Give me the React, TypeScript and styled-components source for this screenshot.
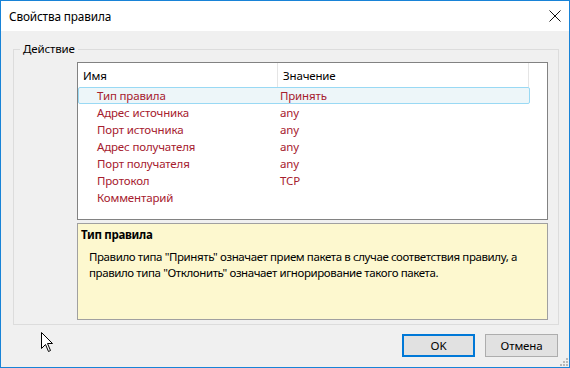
import React from "react";
import styled, { createGlobalStyle } from "styled-components";

interface Field {
  name: string;
  value: string;
}

const fields: Field[] = [
  { name: "Тип правила", value: "Принять" },
  { name: "Адрес источника", value: "any" },
  { name: "Порт источника", value: "any" },
  { name: "Адрес получателя", value: "any" },
  { name: "Порт получателя", value: "any" },
  { name: "Протокол", value: "TCP" },
  { name: "Комментарий", value: "" },
];

const App: React.FC = () => {
  return (
    <>
      <GlobalStyle />
      <S.Window>
        <S.TitleBar>
          <S.Title>Свойства правила</S.Title>
          <S.CloseButton>
            <svg width="12" height="12" viewBox="0 0 12 12">
              <path d="M0.5 0.5 L11.5 11.5 M11.5 0.5 L0.5 11.5" stroke="#111" strokeWidth="1" />
            </svg>
          </S.CloseButton>
        </S.TitleBar>
        <S.Body>
          <S.GroupBox>
            <S.Legend>Действие</S.Legend>
            <S.ListBox>
              <S.HeaderRow>
                <S.HeaderCell $width={200}>Имя</S.HeaderCell>
                <S.HeaderCell $width={251}>Значение</S.HeaderCell>
              </S.HeaderRow>
              {fields.map((f, i) => (
                <S.Row key={f.name} $selected={i === 0}>
                  <S.NameCell>{f.name}</S.NameCell>
                  <S.ValueCell>{f.value}</S.ValueCell>
                </S.Row>
              ))}
            </S.ListBox>
            <S.HintBox>
              <S.HintTitle>Тип правила</S.HintTitle>
              <S.HintText>
                Правило типа "Принять" означает прием пакета в случае соответствия правилу, а правило
                типа "Отклонить" означает игнорирование такого пакета.
              </S.HintText>
            </S.HintBox>
          </S.GroupBox>
          <S.Footer>
            <S.Button $default>OK</S.Button>
            <S.Button>Отмена</S.Button>
          </S.Footer>
          <S.Cursor width="13" height="20" viewBox="0 0 13 20">
            <path
              d="M0.5 0.5 L0.5 16.5 L4.5 12.5 L7.5 19.5 L9.5 18.5 L6.5 11.5 L11.5 11.5 Z"
              fill="#fff"
              stroke="#000"
              strokeWidth="1"
            />
          </S.Cursor>
          <S.Grip width="9" height="9" viewBox="0 0 9 9">
            <rect x="6" y="0" width="2" height="2" fill="#b8b8b8" />
            <rect x="3" y="3" width="2" height="2" fill="#b8b8b8" />
            <rect x="6" y="3" width="2" height="2" fill="#b8b8b8" />
            <rect x="0" y="6" width="2" height="2" fill="#b8b8b8" />
            <rect x="3" y="6" width="2" height="2" fill="#b8b8b8" />
            <rect x="6" y="6" width="2" height="2" fill="#b8b8b8" />
          </S.Grip>
        </S.Body>
      </S.Window>
    </>
  );
};

const GlobalStyle = createGlobalStyle`
  html, body {
    margin: 0;
    padding: 0;
    background: #f0f0f0;
  }
  body {
    font-family: "Noto Sans", "Open Sans", sans-serif;
    font-size: 11.5px;
    letter-spacing: -0.15px;
    color: #000;
  }
`;

const S = {
  Window: styled.div`
    width: 570px;
    height: 368px;
    box-sizing: border-box;
    border: 1px solid #1883d7;
    display: flex;
    flex-direction: column;
    background: #f0f0f0;
  `,

  TitleBar: styled.div`
    height: 30px;
    background: #fff;
    display: flex;
    align-items: center;
    justify-content: space-between;
    padding-left: 8px;
  `,

  Title: styled.div`
    font-size: 11.8px;
  `,

  CloseButton: styled.div`
    width: 28px;
    height: 30px;
    display: flex;
    align-items: center;
    justify-content: center;
  `,

  Body: styled.div`
    flex: 1;
    position: relative;
    padding: 18px 10px 0 12px;
    display: flex;
    flex-direction: column;
  `,

  GroupBox: styled.div`
    position: relative;
    border: 1px solid #dcdcdc;
    padding: 12px 10px 4px 63px;
    display: flex;
    flex-direction: column;
    gap: 3px;
  `,

  Legend: styled.div`
    position: absolute;
    top: -9px;
    left: 6px;
    padding: 0 3px;
    background: #f0f0f0;
    line-height: 16px;
  `,

  ListBox: styled.div`
    height: 158px;
    box-sizing: border-box;
    border: 1px solid #828282;
    background: #fff;
  `,

  HeaderRow: styled.div`
    display: flex;
    height: 24px;
  `,

  HeaderCell: styled.div<{ $width: number }>`
    width: ${(p) => p.$width}px;
    box-sizing: border-box;
    border-right: 1px solid #e5e5e5;
    padding-left: 5px;
    display: flex;
    align-items: center;
  `,

  Row: styled.div<{ $selected?: boolean }>`
    display: flex;
    height: 17px;
    width: 452px;
    box-sizing: border-box;
    border: 1px solid ${(p) => (p.$selected ? "#99d9f4" : "transparent")};
    border-radius: 2px;
    background: ${(p) => (p.$selected ? "#edf6f9" : "transparent")};
    color: #a6202e;
    line-height: 15px;
  `,

  NameCell: styled.div`
    width: 199px;
    padding-left: 18px;
    box-sizing: border-box;
  `,

  ValueCell: styled.div`
    padding-left: 2px;
  `,

  HintBox: styled.div`
    height: 97px;
    box-sizing: border-box;
    border: 1px solid #a0a0a0;
    background: #fdf8cf;
    padding: 3px 3px;
  `,

  HintTitle: styled.div`
    font-weight: bold;
    line-height: 16px;
    letter-spacing: -0.3px;
  `,

  HintText: styled.div`
    margin-top: 6px;
    padding-left: 8px;
    padding-right: 20px;
    line-height: 16px;
    letter-spacing: -0.4px;
  `,

  Footer: styled.div`
    display: flex;
    justify-content: flex-end;
    gap: 10px;
    margin-top: 9px;
    padding-right: 1px;
  `,

  Button: styled.div<{ $default?: boolean }>`
    width: 73px;
    height: 23px;
    box-sizing: border-box;
    background: #e1e1e1;
    border: ${(p) => (p.$default ? "2px solid #0078d7" : "1px solid #adadad")};
    display: flex;
    align-items: center;
    justify-content: center;
  `,

  Cursor: styled.svg`
    position: absolute;
    left: 40px;
    top: 301px;
  `,

  Grip: styled.svg`
    position: absolute;
    right: 0;
    bottom: 0;
  `,
};

export default App;
